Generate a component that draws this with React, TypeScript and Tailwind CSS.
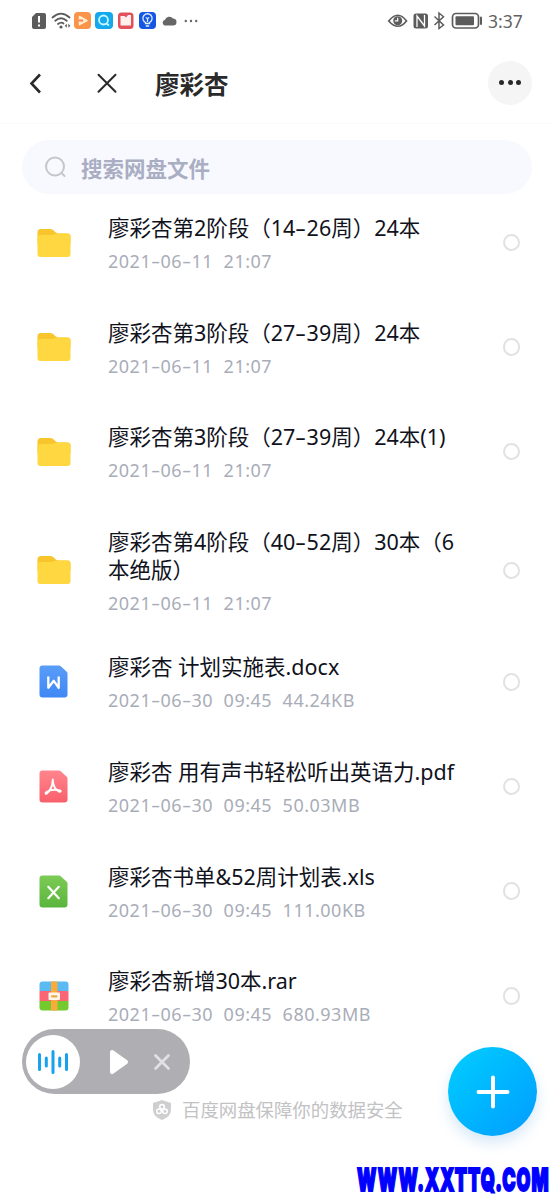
import React from "react";

type Kind = "folder" | "doc" | "pdf" | "xls" | "rar";

interface Entry {
  kind: Kind;
  lines: string[];
  date: string;
  time: string;
  size?: string;
  gap: string;
}

const entries: Entry[] = [
  { kind: "folder", lines: ["廖彩杏第2阶段（14-26周）24本"], date: "2021-06-11", time: "21:07", gap: "mb-[47.6px]" },
  { kind: "folder", lines: ["廖彩杏第3阶段（27-39周）24本"], date: "2021-06-11", time: "21:07", gap: "mb-[47.6px]" },
  { kind: "folder", lines: ["廖彩杏第3阶段（27-39周）24本(1)"], date: "2021-06-11", time: "21:07", gap: "mb-[47.6px]" },
  { kind: "folder", lines: ["廖彩杏第4阶段（40-52周）30本（6", "本绝版）"], date: "2021-06-11", time: "21:07", gap: "mb-[40.7px]" },
  { kind: "doc", lines: ["廖彩杏 计划实施表.docx"], date: "2021-06-30", time: "09:45", size: "44.24KB", gap: "mb-[47.6px]" },
  { kind: "pdf", lines: ["廖彩杏 用有声书轻松听出英语力.pdf"], date: "2021-06-30", time: "09:45", size: "50.03MB", gap: "mb-[47.6px]" },
  { kind: "xls", lines: ["廖彩杏书单&52周计划表.xls"], date: "2021-06-30", time: "09:45", size: "111.00KB", gap: "mb-[47.6px]" },
  { kind: "rar", lines: ["廖彩杏新增30本.rar"], date: "2021-06-30", time: "09:45", size: "680.93MB", gap: "mb-0" },
];

/* Sets hyphens wider than the font's own, in line with the digits. */
function WideHyphens({ text }: { text: string }) {
  return (
    <>
      {text.split("-").map((part, i) => (
        <React.Fragment key={i}>
          {i > 0 && <span className="inline-block w-[0.520em] scale-x-[1.600] text-center tracking-normal">-</span>}
          {part}
        </React.Fragment>
      ))}
    </>
  );
}

function FolderIcon() {
  return (
    <svg width="34" height="30" viewBox="0 0 34 30">
      <path d="M0.500 9V4.500Q0.500 1 4 1H12.500Q15 1 16.500 2.300L18.500 4.300Q20 5.500 22 5.500H30.500Q33.500 5.500 33.500 8.500V16H0.500Z" fill="#f8c62c" />
      <path d="M0.500 10Q0.500 7 3.500 7H14Q16 7 17.500 6.300Q19 5.500 21 5.500H30.500Q33.500 5.500 33.500 8.500V26Q33.500 29 30.500 29H3.500Q0.500 29 0.500 26Z" fill="#ffd740" />
    </svg>
  );
}

function SheetIcon({ kind }: { kind: "doc" | "pdf" | "xls" }) {
  const colors = { doc: ["#5a9df8", "#3f87f5"], pdf: ["#ff858c", "#f9606c"], xls: ["#7ccb56", "#5ab53c"] }[kind];
  return (
    <svg width="29" height="33" viewBox="0 0 29 33">
      <defs>
        <linearGradient id={kind} x1="0" y1="0" x2="0" y2="1">
          <stop offset="0" stopColor={colors[0]} />
          <stop offset="1" stopColor={colors[1]} />
        </linearGradient>
      </defs>
      <path d="M3.500 0.500H20Q21 0.500 22 1.500L27.500 6.500Q28.500 7.500 28.500 8.500V29.500Q28.500 32.500 25.500 32.500H3.500Q0.500 32.500 0.500 29.500V3.500Q0.500 0.500 3.500 0.500Z" fill={`url(#${kind})`} />
      <g fill="none" stroke="#fff" strokeWidth="2.200" strokeLinecap="round" strokeLinejoin="round">
        {kind === "doc" && <path d="M9.300 11.500V22.800L14.800 15.800L19.700 22.800V11.500" strokeWidth="2.300" strokeLinecap="butt" />}
        {kind === "xls" && <path d="M9.300 11.800L19.800 23.200M19.800 11.800L9.300 23.200" />}
        {kind === "pdf" && (
          <path d="M13.800 9.500C13.700 14.500 11.500 20.500 7.500 23.600C6.300 24.500 6.200 22.800 7.500 22C11.500 19.600 16 19.400 20.700 20.500C22.500 21 21.500 22.200 20 21.600C15.800 19.700 13.700 14.200 13.800 9.500Z" strokeWidth="2" />
        )}
      </g>
    </svg>
  );
}

function RarIcon() {
  return (
    <svg width="30" height="30" viewBox="0 0 30 30">
      <path d="M0.500 10V3.500Q0.500 0.500 3.500 0.500H26.500Q29.500 0.500 29.500 3.500V10Z" fill="#5bbaf2" />
      <path d="M0.500 10H29.500V20H0.500Z" fill="#fb6674" />
      <path d="M0.500 20H29.500V26.500Q29.500 29.500 26.500 29.500H3.500Q0.500 29.500 0.500 26.500Z" fill="#73c92e" />
      <path d="M12 0.500H18.500V29.500H12Z" fill="#faac3a" />
      <rect x="9.500" y="11.500" width="11.500" height="7.500" rx="1" fill="#fff7ea" />
      <rect x="12" y="14.200" width="6.500" height="2.400" rx="1" fill="#e9a948" />
    </svg>
  );
}

function EntryIcon({ kind }: { kind: Kind }) {
  if (kind === "folder") return <FolderIcon />;
  if (kind === "rar") return <RarIcon />;
  return <SheetIcon kind={kind} />;
}

function Row({ entry }: { entry: Entry }) {
  return (
    <li className={`flex items-center ${entry.gap}`}>
      <div className="ml-[36px] flex w-[35px] justify-center">
        <EntryIcon kind={entry.kind} />
      </div>
      <div className="ml-[37px] w-[390px] whitespace-nowrap">
        {entry.lines.map((line) => (
          <div key={line} className="h-7 text-[21.500px] leading-[28px] text-[#10121c]">
            <WideHyphens text={line} />
          </div>
        ))}
        <div className="flex h-[29px] gap-[10.500px] pt-2 text-[18px] leading-[22px] tracking-[0.500px] text-[#a9adb8]">
          <span><WideHyphens text={entry.date} /></span>
          <span>{entry.time}</span>
          {entry.size && <span>{entry.size}</span>}
        </div>
      </div>
      <span className="ml-[4.500px] size-[17.500px] rounded-full border-[2.500px] border-[#e2e2e3]" />
    </li>
  );
}

function StatusBar() {
  return (
    <header className="flex h-[42px] items-center justify-between pr-[31px] pl-[30px]">
      <svg width="170" height="22" viewBox="30 10 170 22">
        <path d="M36 13H44Q46 13 46 15V27Q46 29 44 29H34Q32 29 32 27V17Z" fill="#5c5c5c" />
        <path d="M39 16V22.500M39 24.500V26.500" stroke="#fff" strokeWidth="2" />
        <g fill="none" stroke="#5c5c5c" strokeWidth="1.800" strokeLinecap="round">
          <path d="M52.500 17.500Q61 9.800 69.500 17.500" />
          <path d="M55.300 20.800Q61 15.800 66.700 20.800" />
          <path d="M58 24Q61 21.500 63.500 23.500" />
        </g>
        <circle cx="61" cy="27" r="1.600" fill="#5c5c5c" />
        <path d="M66.800 23.700V27.700L64.700 25.700ZM68.300 23.700V27.700L70.400 25.700Z" fill="#5c5c5c" />
        <rect x="74" y="12" width="17" height="17" rx="4" fill="#fb9449" />
        <path d="M79.500 16.500L87 20.600L79.500 24.700Z" fill="#ffe3bd" stroke="#fff0db" strokeWidth="1.500" strokeLinejoin="round" />
        <path d="M78.500 20.500H83" stroke="#fb7548" strokeWidth="1.800" />
        <rect x="95" y="12" width="18" height="17" rx="4" fill="#14a8ec" />
        <circle cx="103.500" cy="20" r="4.500" fill="none" stroke="#c7f6ff" strokeWidth="1.800" />
        <path d="M106.500 23.500L109 25.500" stroke="#c7f6ff" strokeWidth="1.800" />
        <rect x="118" y="12.500" width="15.500" height="16.500" rx="3.500" fill="#e2505b" />
        <path d="M120.500 16H124.500L126 17.500L128 15H131V25.500H120.500Z" fill="#fff0ee" />
        <rect x="139" y="12" width="17" height="17" rx="4" fill="#1557e2" />
        <g fill="none" stroke="#e1efff" strokeWidth="1.300">
          <path d="M145.500 23.500V22.500A4.600 4.600 0 1 1 149.500 22.500V23.500ZM145.800 26H149.200M147.500 22V18.500L145.800 17.500M147.500 18.500L149.200 17.500" />
        </g>
        <path d="M164.500 25.500A3 3 0 0 1 165 19.800A4.600 4.600 0 0 1 173 18.500A3.500 3.500 0 0 1 173 25.500Z" fill="#666" />
        <g fill="#666">
          <circle cx="185.800" cy="21" r="1.200" />
          <circle cx="191" cy="21" r="1.200" />
          <circle cx="196.200" cy="21" r="1.200" />
        </g>
      </svg>
      <div className="flex items-center">
        <svg width="98" height="22" viewBox="386 10 98 22">
          <path d="M388.700 21Q398 9.500 406.500 21Q398 31.500 388.700 21Z" fill="none" stroke="#5c5c5c" strokeWidth="1.700" />
          <circle cx="397.700" cy="20.800" r="4.500" fill="#5c5c5c" />
          <path d="M394.800 20.800H397.700V17.800" stroke="#fff" strokeWidth="1.200" fill="none" />
          <rect x="413.500" y="13.500" width="14.500" height="15" rx="2.500" fill="#5c5c5c" />
          <path d="M417 27V16L424.500 26V15" fill="none" stroke="#fff" strokeWidth="1.300" />
          <path d="M434.500 16.500L443.500 25L439 28.500V13L443.500 16.800L434.500 25" fill="none" stroke="#5c5c5c" strokeWidth="1.500" />
          <rect x="452.500" y="13.500" width="26" height="14.500" rx="3.500" fill="none" stroke="#5c5c5c" strokeWidth="1.700" />
          <rect x="455.500" y="16.300" width="18.500" height="9" rx="1" fill="#5c5c5c" />
          <path d="M481 17.500V24" stroke="#5c5c5c" strokeWidth="2" strokeLinecap="round" />
        </svg>
        <span className="ml-[4px] w-[35px] text-[17.500px] leading-5 whitespace-nowrap text-[#626262]">3:37</span>
      </div>
    </header>
  );
}

export default function App() {
  return (
    <main className="relative h-[1200px] w-[554px] overflow-hidden bg-white font-['Noto_Sans','Noto_Sans_CJK_SC',sans-serif]">
      <StatusBar />
      <nav className="flex h-[82px] items-center border-b border-[#fafafa] pr-[22px] pl-[28px]">
        <svg width="92" height="24" viewBox="28 71 92 24" fill="none" stroke="#292929" strokeLinecap="round">
          <path d="M40 74.500L31.500 83.500L40 92.500" strokeWidth="2.600" strokeLinecap="butt" />
          <path d="M98.500 74.800L115.500 91.800M115.500 74.800L98.500 91.800" strokeWidth="2" />
        </svg>
        <h1 className="mt-1 ml-[35px] text-[24.500px] leading-8 font-bold text-[#2a2a2a]">廖彩杏</h1>
        <button className="ml-auto flex size-11 items-center justify-center gap-[3.500px] rounded-full bg-[#f5f5f5]">
          <i className="size-[5px] rounded-full bg-[#292929]" />
          <i className="size-[5px] rounded-full bg-[#292929]" />
          <i className="size-[5px] rounded-full bg-[#292929]" />
        </button>
      </nav>
      <div className="mx-[22px] mt-4 flex h-[54px] items-center rounded-full bg-[#f8f9fe] pl-[22px]">
        <svg width="24" height="24" viewBox="0 0 24 24" fill="none" stroke="#c5c6cd" strokeWidth="2" strokeLinecap="round">
          <circle cx="11" cy="11.500" r="9" />
          <path d="M17.500 18L20.500 21" />
        </svg>
        <span className="mt-[3px] ml-[13px] text-[21.500px] leading-8 font-bold text-[#a9aec3]">搜索网盘文件</span>
      </div>
      <ul className="mt-5">
        {entries.map((entry) => (
          <Row key={entry.lines[0]} entry={entry} />
        ))}
      </ul>
      <footer className="mt-[72px] flex h-7 items-center pl-[152px] text-[18.400px] text-[#c2c2c4]">
        <svg width="20" height="22" viewBox="0 0 20 22">
          <path d="M10 1L19 4V11Q19 17.500 10 21Q1 17.500 1 11V4Z" fill="#cfcfd1" />
          <g fill="none" stroke="#fff" strokeWidth="1.500">
            <circle cx="10" cy="7.800" r="2.300" />
            <circle cx="7" cy="12.300" r="2.300" />
            <circle cx="13" cy="12.300" r="2.300" />
          </g>
        </svg>
        <span className="ml-[10px] whitespace-nowrap">百度网盘保障你的数据安全</span>
      </footer>

      <div className="absolute top-[1029px] left-[21.500px] flex h-[65px] w-[168.500px] items-center rounded-full bg-[#afafb3] pl-[4.500px]">
        <div className="flex size-[54px] items-center justify-center rounded-full bg-white">
          <svg width="32" height="26" viewBox="0 0 32 26" stroke="#16a2ed" strokeWidth="3" strokeLinecap="round">
            <path d="M2.500 5.500V20.500M9.300 9V17M16 2.500V23.500M22.700 9V17M29.500 5.500V20.500" />
          </svg>
        </div>
        <svg className="ml-[29px]" width="20" height="26" viewBox="0 0 20 26">
          <path d="M3 3L17 13L3 23Z" fill="#fff" stroke="#fff" strokeWidth="4" strokeLinejoin="round" />
        </svg>
        <svg className="ml-[24px]" width="18" height="18" viewBox="0 0 18 18" stroke="#e1e1e3" strokeWidth="2.800" strokeLinecap="round">
          <path d="M2.500 2.500L15.500 15.500M15.500 2.500L2.500 15.500" />
        </svg>
      </div>

      <button className="absolute top-[1047px] left-[448px] flex size-[89px] items-center justify-center rounded-full bg-linear-to-br from-[#06cefe] to-[#079cff] shadow-[0_7px_14px_rgba(70,150,220,0.22)]">
        <svg width="34" height="34" viewBox="0 0 34 34" stroke="#fff" strokeWidth="4" strokeLinecap="round">
          <path d="M17 2.500V31.500M2.500 17H31.500" />
        </svg>
      </button>

      <div className="absolute top-[1159px] left-[357px] w-[192px] text-[32px] leading-10 text-[#0000fe]">
        <span className="inline-block origin-left scale-x-[0.560] font-['Inter'] font-black tracking-[1.900px] whitespace-nowrap [-webkit-text-stroke:2px_#0000fe]">
          WWW.XXTTQ.COM
        </span>
      </div>
    </main>
  );
}
